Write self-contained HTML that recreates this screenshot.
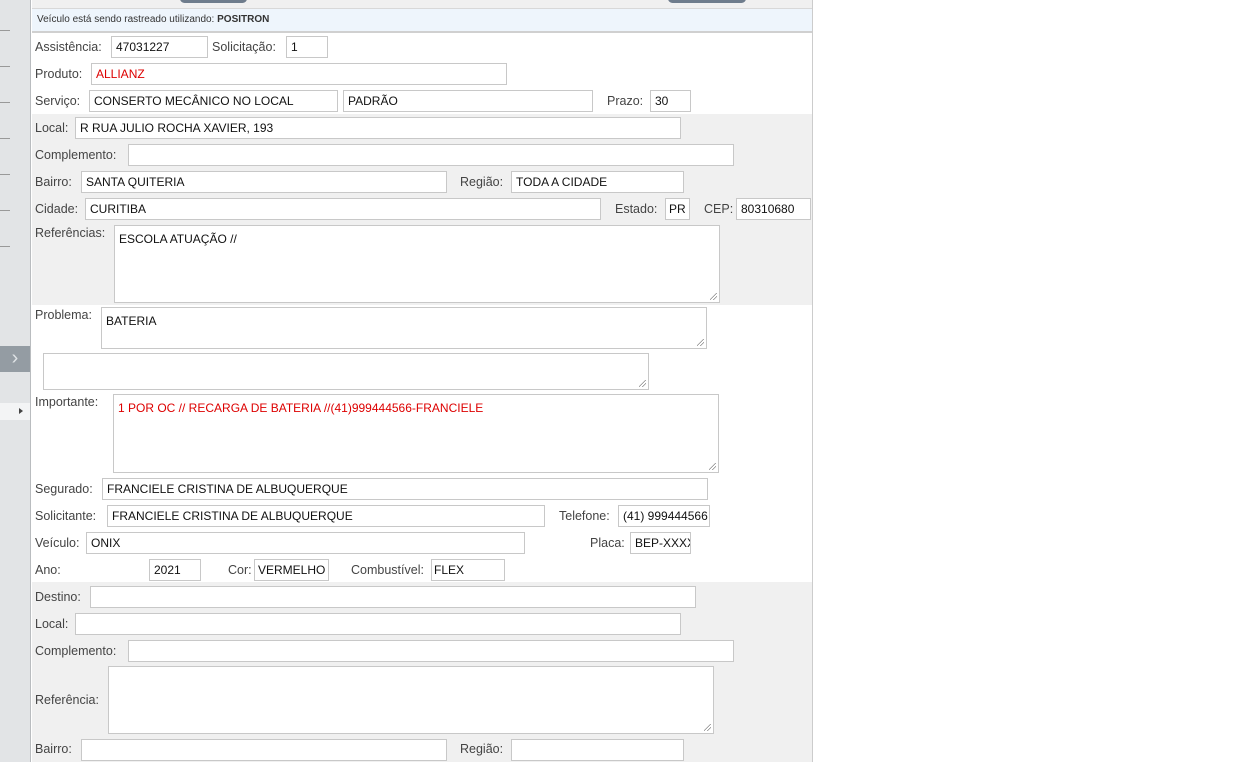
<!DOCTYPE html>
<html><head><meta charset="utf-8"><style>
*{box-sizing:border-box;margin:0;padding:0}
body{width:1260px;height:762px;overflow:hidden;background:#fff;font-family:"Liberation Sans",sans-serif;font-size:12px;color:#333;position:relative}
.a{position:absolute}
.l{position:absolute;color:#444;font-size:12.5px;line-height:14px}
.i{position:absolute;background:#fff;border:1px solid #c8c8c8;font-size:12px;line-height:20px;padding-left:4px;color:#111;white-space:nowrap;overflow:hidden}
.t{line-height:14px;padding-top:6px}
.r{color:#d00}
.g{position:absolute;left:32px;width:780px;background:#f0f0f0}
.gr:after{content:"";position:absolute;right:2px;bottom:2px;width:7px;height:7px;background:linear-gradient(135deg,transparent 45%,#888 45%,#888 52%,transparent 52%,transparent 70%,#888 70%,#888 77%,transparent 77%)}
</style></head><body>
<div class="a" style="left:0;top:0;width:31px;height:762px;background:#e2e4e6;border-right:1px solid #b9bcbf"></div>
<div class="a" style="left:0;top:30px;width:10px;height:1px;background:#999"></div>
<div class="a" style="left:0;top:66px;width:10px;height:1px;background:#999"></div>
<div class="a" style="left:0;top:102px;width:10px;height:1px;background:#999"></div>
<div class="a" style="left:0;top:138px;width:10px;height:1px;background:#999"></div>
<div class="a" style="left:0;top:174px;width:10px;height:1px;background:#999"></div>
<div class="a" style="left:0;top:210px;width:10px;height:1px;background:#999"></div>
<div class="a" style="left:0;top:246px;width:10px;height:1px;background:#999"></div>
<div class="a" style="left:0;top:346px;width:30px;height:26px;background:#949ca3;color:#dfe3e6;font-size:20px;line-height:24px;text-align:center">›</div>
<div class="a" style="left:0;top:403px;width:30px;height:17px;background:#f3f4f5"></div>
<div class="a" style="left:19px;top:408px;width:0;height:0;border-left:4px solid #444;border-top:3.5px solid transparent;border-bottom:3.5px solid transparent"></div>
<div class="a" style="left:32px;top:0;width:781px;height:762px;border-right:1px solid #ccc"></div>
<div class="a" style="left:32px;top:0;width:780px;height:8px;background:#f0f0f0"></div>
<div class="a" style="left:180px;top:-6px;width:67px;height:9px;background:#6e7c8c;border-radius:5px"></div>
<div class="a" style="left:668px;top:-6px;width:78px;height:9px;background:#6e7c8c;border-radius:5px"></div>
<div class="a" style="left:32px;top:8px;width:780px;height:25px;background:#eef5fc;border-top:1px solid #d8d8d8;border-bottom:2px solid #d0d0d0;font-size:10px;line-height:22px;padding-left:5px;color:#333">Veículo está sendo rastreado utilizando: <b>POSITRON</b></div>
<div class="g" style="top:114px;height:191px"></div>
<div class="g" style="top:582px;height:180px"></div>

<div class="l" style="left:35px;top:40px">Assistência:</div><div class="i" style="left:111px;top:36px;width:97px;height:22px">47031227</div>
<div class="l" style="left:212px;top:40px">Solicitação:</div><div class="i" style="left:286px;top:36px;width:42px;height:22px">1</div>
<div class="l" style="left:35px;top:67px">Produto:</div><div class="i r" style="left:91px;top:63px;width:416px;height:22px">ALLIANZ</div>
<div class="l" style="left:35px;top:94px">Serviço:</div><div class="i" style="left:89px;top:90px;width:249px;height:22px">CONSERTO MECÂNICO NO LOCAL</div>
<div class="i" style="left:343px;top:90px;width:250px;height:22px">PADRÃO</div>
<div class="l" style="left:607px;top:94px">Prazo:</div><div class="i" style="left:650px;top:90px;width:41px;height:22px">30</div>
<div class="l" style="left:35px;top:121px">Local:</div><div class="i" style="left:75px;top:117px;width:606px;height:22px">R RUA JULIO ROCHA XAVIER, 193</div>
<div class="l" style="left:35px;top:148px">Complemento:</div><div class="i" style="left:128px;top:144px;width:606px;height:22px"></div>
<div class="l" style="left:35px;top:175px">Bairro:</div><div class="i" style="left:81px;top:171px;width:366px;height:22px">SANTA QUITERIA</div>
<div class="l" style="left:460px;top:175px">Região:</div><div class="i" style="left:511px;top:171px;width:173px;height:22px">TODA A CIDADE</div>
<div class="l" style="left:35px;top:202px">Cidade:</div><div class="i" style="left:85px;top:198px;width:516px;height:22px">CURITIBA</div>
<div class="l" style="left:615px;top:202px">Estado:</div><div class="i" style="left:665px;top:198px;width:25px;height:22px;padding-left:3px">PR</div>
<div class="l" style="left:704px;top:202px">CEP:</div><div class="i" style="left:736px;top:198px;width:75px;height:22px">80310680</div>
<div class="l" style="left:35px;top:226px">Referências:</div><div class="i t gr" style="left:114px;top:225px;width:606px;height:78px">ESCOLA ATUAÇÃO //</div>
<div class="l" style="left:35px;top:308px">Problema:</div><div class="i t gr" style="left:101px;top:307px;width:606px;height:42px">BATERIA</div>
<div class="i gr" style="left:43px;top:353px;width:606px;height:37px"></div>
<div class="l" style="left:35px;top:395px">Importante:</div><div class="i t r gr" style="left:113px;top:394px;width:606px;height:79px">1 POR OC // RECARGA DE BATERIA //(41)999444566-FRANCIELE</div>
<div class="l" style="left:35px;top:482px">Segurado:</div><div class="i" style="left:102px;top:478px;width:606px;height:22px">FRANCIELE CRISTINA DE ALBUQUERQUE</div>
<div class="l" style="left:35px;top:509px">Solicitante:</div><div class="i" style="left:107px;top:505px;width:438px;height:22px">FRANCIELE CRISTINA DE ALBUQUERQUE</div>
<div class="l" style="left:559px;top:509px">Telefone:</div><div class="i" style="left:618px;top:505px;width:92px;height:22px">(41) 999444566</div>
<div class="l" style="left:35px;top:536px">Veículo:</div><div class="i" style="left:86px;top:532px;width:439px;height:22px">ONIX</div>
<div class="l" style="left:590px;top:536px">Placa:</div><div class="i" style="left:630px;top:532px;width:61px;height:22px">BEP-XXXX</div>
<div class="l" style="left:35px;top:563px">Ano:</div><div class="i" style="left:149px;top:559px;width:52px;height:22px">2021</div>
<div class="l" style="left:228px;top:563px">Cor:</div><div class="i" style="left:254px;top:559px;width:75px;height:22px;padding-left:3px">VERMELHO</div>
<div class="l" style="left:351px;top:563px">Combustível:</div><div class="i" style="left:431px;top:559px;width:74px;height:22px;padding-left:2px">FLEX</div>
<div class="l" style="left:35px;top:590px">Destino:</div><div class="i" style="left:90px;top:586px;width:606px;height:22px"></div>
<div class="l" style="left:35px;top:617px">Local:</div><div class="i" style="left:75px;top:613px;width:606px;height:22px"></div>
<div class="l" style="left:35px;top:644px">Complemento:</div><div class="i" style="left:128px;top:640px;width:606px;height:22px"></div>
<div class="l" style="left:35px;top:693px">Referência:</div><div class="i gr" style="left:108px;top:666px;width:606px;height:68px"></div>
<div class="l" style="left:35px;top:742px">Bairro:</div><div class="i" style="left:81px;top:739px;width:366px;height:22px"></div>
<div class="l" style="left:460px;top:742px">Região:</div><div class="i" style="left:511px;top:739px;width:173px;height:22px"></div>
</body></html>
